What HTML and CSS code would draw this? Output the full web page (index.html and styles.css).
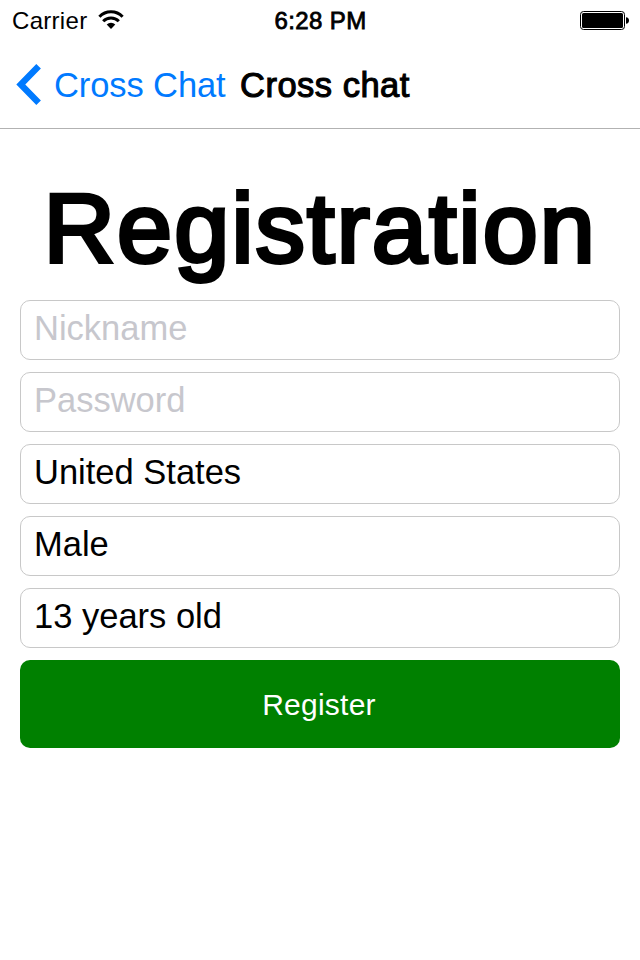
FILE: index.html
```html
<!DOCTYPE html>
<html lang="en">
<head>
<meta charset="utf-8">
<title>Cross chat</title>
<link rel="stylesheet" href="styles.css">
</head>
<body>
<div class="status">
  <div class="network">
    <span class="carrier">Carrier</span>
    <svg class="wifi" width="26" height="20" viewBox="0 0 26 20">
      <path class="arc" d="M1.4 6.8A16 16 0 0 1 24.6 6.8M5.2 11.2A11 11 0 0 1 20.8 11.2"/>
      <path d="M8.7 14.6A6.2 6.2 0 0 1 17.3 14.6L13 19Z"/>
    </svg>
  </div>
  <span class="time">6:28 PM</span>
  <svg class="battery" width="50" height="20" viewBox="0 0 50 20">
    <rect class="case" x=".5" y="1.5" width="44" height="18" rx="3"/>
    <rect x="2" y="3" width="41" height="15" rx="1.5"/>
    <path d="M46 7.3Q49 7.5 49 10.5T46 13.7Z"/>
  </svg>
</div>
<header class="nav">
  <a class="back">
    <svg class="chevron" width="26" height="42" viewBox="0 0 26 42"><path d="M22.6 3.3L4.8 21.5L22.6 39.7"/></svg>
    <span class="back-label">Cross Chat</span>
  </a>
  <span class="title">Cross chat</span>
</header>
<main class="form">
  <h1>Registration</h1>
  <div class="field placeholder nickname">Nickname</div>
  <div class="field placeholder password">Password</div>
  <div class="field country">United States</div>
  <div class="field gender">Male</div>
  <div class="field age">13 years old</div>
  <button class="register">Register</button>
</main>
</body>
</html>
```

FILE: styles.css
```css
* { box-sizing: border-box; }
body {
  margin: 0;
  height: 960px;
  overflow: hidden;
  background: #fff;
  color: #000;
  font-family: "Liberation Sans", Arial, sans-serif;
}
.status {
  height: 40px;
  padding: 0 10px 0 12px;
  display: grid;
  grid-template-columns: 1fr auto 1fr;
  align-items: center;
  font-size: 24px;
  line-height: 40px;
}
.network { display: flex; align-items: center; gap: 10.5px; }
.carrier, .time { padding-top: 2px; line-height: 38px; }
.carrier { letter-spacing: .3px; }
.time { -webkit-text-stroke: .8px #000; letter-spacing: .4px; margin-right: 1px; }
.arc { fill: none; stroke: #000; stroke-width: 3; }
.battery { justify-self: end; }
.case { fill: none; stroke: #000; stroke-width: 1; }
.nav {
  height: 89px;
  padding-left: 16px;
  border-bottom: 1px solid #b2b2b2;
  display: flex;
  font-size: 34.5px;
  line-height: 90px;
}
.back { display: flex; align-items: center; color: #007aff; width: 224px; }
.chevron { margin-right: 12px; }
.chevron path { fill: none; stroke: #007aff; stroke-width: 6.4; }
.back-label { letter-spacing: -.1px; padding-top: 1px; }
.title { -webkit-text-stroke: 1.1px #000; letter-spacing: .5px; }
.form {
  padding: 41px 20px 0;
  display: flex;
  flex-direction: column;
  gap: 12px;
}
h1 {
  margin: 0 0 2px;
  height: 116px;
  line-height: 116px;
  font-size: 99px;
  font-weight: 400;
  letter-spacing: 2.1px;
  padding-left: 23.5px;
  -webkit-text-stroke: 4px #000;
  white-space: nowrap;
}
.field {
  height: 60px;
  padding-left: 13px;
  border: 1px solid #c8c8c8;
  border-radius: 10px;
  font-size: 34.5px;
  line-height: 54px;
}
.placeholder { color: #c7c7cd; }
.register {
  height: 88px;
  padding: 2px 2px 0 0;
  border: 0;
  border-radius: 10px;
  background: #008000;
  color: #fff;
  font: 30px "Liberation Sans", Arial, sans-serif;
  letter-spacing: .25px;
}
```
